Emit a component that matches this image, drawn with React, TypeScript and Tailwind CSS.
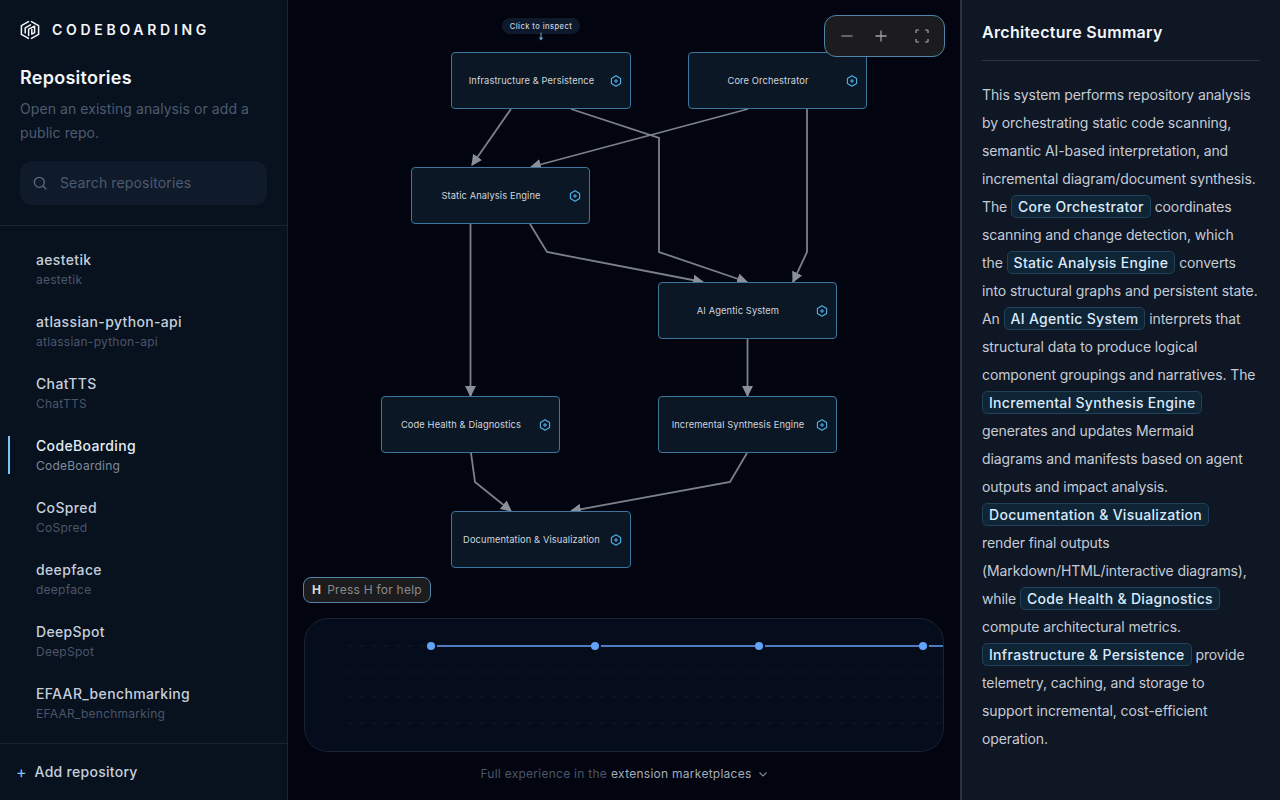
const repos = ["aestetik", "atlassian-python-api", "ChatTTS", "CodeBoarding", "CoSpred", "deepface", "DeepSpot", "EFAAR_benchmarking"];

const nodes = [
  { label: "Infrastructure & Persistence", x: 163, y: 52, w: 180 },
  { label: "Core Orchestrator", x: 400, y: 52, w: 179 },
  { label: "Static Analysis Engine", x: 123, y: 167, w: 179 },
  { label: "AI Agentic System", x: 370, y: 282, w: 179 },
  { label: "Code Health & Diagnostics", x: 93, y: 396, w: 179 },
  { label: "Incremental Synthesis Engine", x: 370, y: 396, w: 179 },
  { label: "Documentation & Visualization", x: 163, y: 511, w: 180 },
];

const edges = [
  "M223 109 L184 165",
  "M283 109 L371 138 L371 252 L459 282",
  "M460 109 L243 167",
  "M519 109 L519 252 L505 282",
  "M182.5 224 L182.5 396",
  "M242 224 L259 252 L415 282",
  "M459.5 339 L459.5 396",
  "M183 453 L187 482 L223 511",
  "M459 453 L442 482 L283 511",
];

function HexPlus() {
  return (
    <svg width="12" height="12" viewBox="0 0 12 12" fill="none" stroke="#4fb3ea" strokeWidth="1.1" className="shrink-0">
      <path d="M6 0.8 L10.6 3.4 V8.6 L6 11.2 L1.4 8.6 V3.4 Z" strokeLinejoin="round" />
      <path d="M6 4 V8 M4 6 H8" strokeWidth="1" />
    </svg>
  );
}

function Logo() {
  return (
    <svg width="20" height="20" viewBox="0 0 20 20" fill="none" stroke="#f3f5f8" strokeWidth="1.5" strokeLinejoin="round" strokeLinecap="round">
      <path d="M8.5 1.6 L1.4 5.6 V14.4 L8.5 18.4" />
      <path d="M11.5 1.6 L18.6 5.6 V14.4 L11.5 18.4" />
      <path d="M5.2 13 V7.8 L10.5 4.8" />
      <path d="M8.6 15.6 V9.2 L14.6 6.2 V12.6 L11.8 14.2 V9.4" />
    </svg>
  );
}

function Chip({ children }: { children: string }) {
  return (
    <span className="inline-block rounded-[5px] border border-[#1f4159] bg-[#0f2435] px-1.5 leading-[21px] font-medium tracking-[0.022em] whitespace-nowrap text-[#dbeafe]">{children}</span>
  );
}

export default function App() {
  return (
    <div className="flex h-[800px] w-[1280px] overflow-hidden bg-[#02050f] font-['Inter',sans-serif] text-white">
      <aside className="flex w-[288px] shrink-0 flex-col border-r border-[#1a2433] bg-[#08111e]">
        <div className="border-b border-[#1a2433] px-5 pt-5 pb-5">
          <div className="flex h-5 items-center gap-3">
            <Logo />
            <span className="text-sm font-semibold tracking-[0.265em] text-[#f3f5f8]">CODEBOARDING</span>
          </div>
          <h1 className="mt-6 text-[18px] leading-7 font-semibold tracking-[0.015em] text-[#f3f6fa]">Repositories</h1>
          <p className="mt-[5px] text-sm leading-6 tracking-[0.005em] text-[#4d5b70]">Open an existing analysis or add a public repo.</p>
          <div className="mt-4 flex h-11 w-[247px] items-center gap-3 rounded-xl bg-[#0f1a2a] px-3">
            <svg width="16" height="16" viewBox="0 0 24 24" fill="none" stroke="#5b6a7f" strokeWidth="2" strokeLinecap="round">
              <circle cx="11" cy="11" r="7.5" />
              <path d="M21 21l-4.5-4.5" />
            </svg>
            <span className="text-sm tracking-[0.01em] text-[#4d5b70]">Search repositories</span>
          </div>
        </div>
        <div className="flex-1 overflow-hidden pt-[22px]">
          {repos.map((r) => (
            <div key={r} className="relative h-[62px] pl-9">
              {r === "CodeBoarding" && <div className="absolute top-[2px] left-2 h-[38px] w-0.5 bg-[#7cc4f5]" />}
              <div className={`text-sm leading-6 font-medium tracking-[0.025em] ${r === "CodeBoarding" ? "text-[#e5edf6]" : "text-[#c5cfdb]"}`}>{r}</div>
              <div className={`-mt-px text-xs leading-[18px] tracking-[0.02em] ${r === "CodeBoarding" ? "text-[#7f8b9b]" : "text-[#4a566a]"}`}>{r}</div>
            </div>
          ))}
        </div>
        <div className="flex h-[57px] items-center gap-2 border-t border-[#1a2433] pl-4">
          <span className="text-base leading-none text-[#7cc4f5]">+</span>
          <span className="text-sm font-medium tracking-[0.02em] text-[#c5cfdb]">Add repository</span>
        </div>
      </aside>

      <main className="flex w-[672px] shrink-0 flex-col px-4">
        <div className="relative -mx-4 h-[570px] shrink-0">
          <svg className="absolute inset-0" width="672" height="570" fill="none">
            <defs>
              <marker id="arrow" viewBox="0 0 10 10" refX="9" refY="5" markerWidth="11" markerHeight="11" markerUnits="userSpaceOnUse" orient="auto">
                <path d="M0 0 L10 5 L0 10 Z" fill="#8b8f97" />
              </marker>
            </defs>
            {edges.map((d) => (
              <path key={d} d={d} stroke="#7c8088" strokeWidth="1.8" markerEnd="url(#arrow)" />
            ))}
          </svg>
          {nodes.map((n) => (
            <div
              key={n.label}
              style={{ left: n.x, top: n.y, width: n.w }}
              className="absolute flex h-[57px] items-center rounded-[4px] border border-[#3b779d] bg-[#0b1724] pr-2"
            >
              <div className="flex-1 pl-px text-center text-[9.3px] tracking-[0.012em] text-[#cfd6df]">{n.label}</div>
              <HexPlus />
            </div>
          ))}
          <div className="absolute top-[18px] left-[214px] flex h-4 w-[78px] items-center justify-center rounded-full bg-[#0e1a2b] pt-px text-[7.5px] font-medium tracking-[0.06em] text-[#c5d2e0]">
            Click to inspect
          </div>
          <svg className="absolute top-[32px] left-[250px]" width="6" height="9" viewBox="0 0 6 9" fill="none">
            <path d="M3 0.5 V7" stroke="#6fa3c9" strokeWidth="1" />
            <path d="M0.8 5.5 L3 8.5 L5.2 5.5 Z" fill="#6fa3c9" />
          </svg>
          <div className="absolute top-[15px] left-[536px] flex h-[42px] w-[121px] items-center rounded-xl border border-[#4d86a8] bg-[#1c1c1e] text-[#9a9a9a]">
            <svg className="ml-[16px]" width="12" height="12" viewBox="0 0 12 12" stroke="#8f8f8f" strokeWidth="1.3"><path d="M0.5 6 H11.5" /></svg>
            <svg className="ml-[22px]" width="12" height="12" viewBox="0 0 12 12" stroke="#a0a0a0" strokeWidth="1.3"><path d="M0.5 6 H11.5 M6 0.5 V11.5" /></svg>
            <svg className="ml-[28px]" width="14" height="14" viewBox="0 0 14 14" fill="none" stroke="#a8a8a8" strokeWidth="1.2"><path d="M1 4 V1.5 Q1 1 1.5 1 H4 M10 1 H12.5 Q13 1 13 1.5 V4 M13 10 V12.5 Q13 13 12.5 13 H10 M4 13 H1.5 Q1 13 1 12.5 V10" /></svg>
          </div>
        </div>
        <div className="mt-[7px] flex h-[26px] w-[128px] -translate-x-px items-center gap-[6px] rounded-lg border border-[#4d86a8] bg-[#1c1c1e] px-2 text-xs tracking-[0.02em]">
          <span className="font-bold text-[#d8d8d8]">H</span>
          <span className="text-[#8a8a8a]">Press H for help</span>
        </div>
        <div className="mt-[15px] h-[134px] w-[640px] overflow-hidden rounded-3xl border border-[#182334] bg-[#050c1b]">
          <svg width="640" height="134" fill="none">
            {[27, 53, 78, 104].map((y) => (
              <path key={y} d={`M43 ${y} H640`} stroke="#101a2a" strokeWidth="1" strokeDasharray="5 7" />
            ))}
            <path d="M132 27 H290 M296 27 H454 M460 27 H618 M624 27 H640" stroke="#4d7cc0" strokeWidth="2" />
            {[126, 290, 454, 618].map((x) => (
              <circle key={x} cx={x} cy="27" r="4" fill="#60a5fa" />
            ))}
          </svg>
        </div>
        <div className="mt-[14px] flex items-center justify-center gap-1 text-xs tracking-[0.022em] text-[#4a566a]">
          <span>Full experience in the</span>
          <span className="text-[#a3adba]">extension marketplaces</span>
          <svg className="ml-0.5" width="10" height="10" viewBox="0 0 10 10" fill="none" stroke="#7d8693" strokeWidth="1.2"><path d="M1.5 3.5 L5 7 L8.5 3.5" /></svg>
        </div>
      </main>

      <aside className="w-[320px] shrink-0 border-l-2 border-[#2a3240] bg-[#0f1624] pr-5 pl-5">
        <div className="flex h-[61px] items-center border-b border-[#2a3442] pt-[3px] text-base font-semibold tracking-[0.02em] text-[#f3f6fa]">Architecture Summary</div>
        <p className="mt-5 text-sm leading-7 tracking-[-0.007em] whitespace-nowrap text-[#c5ccd6]">
          This system performs repository analysis<br />
          by orchestrating static code scanning,<br />
          semantic AI-based interpretation, and<br />
          incremental diagram/document synthesis.<br />
          The <Chip>Core Orchestrator</Chip> coordinates<br />
          scanning and change detection, which<br />
          the <Chip>Static Analysis Engine</Chip> converts<br />
          into structural graphs and persistent state.<br />
          An <Chip>AI Agentic System</Chip> interprets that<br />
          structural data to produce logical<br />
          component groupings and narratives. The<br />
          <Chip>Incremental Synthesis Engine</Chip><br />
          generates and updates Mermaid<br />
          diagrams and manifests based on agent<br />
          outputs and impact analysis.<br />
          <Chip>Documentation &amp; Visualization</Chip><br />
          render final outputs<br />
          (Markdown/HTML/interactive diagrams),<br />
          while <Chip>Code Health &amp; Diagnostics</Chip><br />
          compute architectural metrics.<br />
          <Chip>Infrastructure &amp; Persistence</Chip> provide<br />
          telemetry, caching, and storage to<br />
          support incremental, cost-efficient<br />
          operation.
        </p>
      </aside>
    </div>
  );
}
